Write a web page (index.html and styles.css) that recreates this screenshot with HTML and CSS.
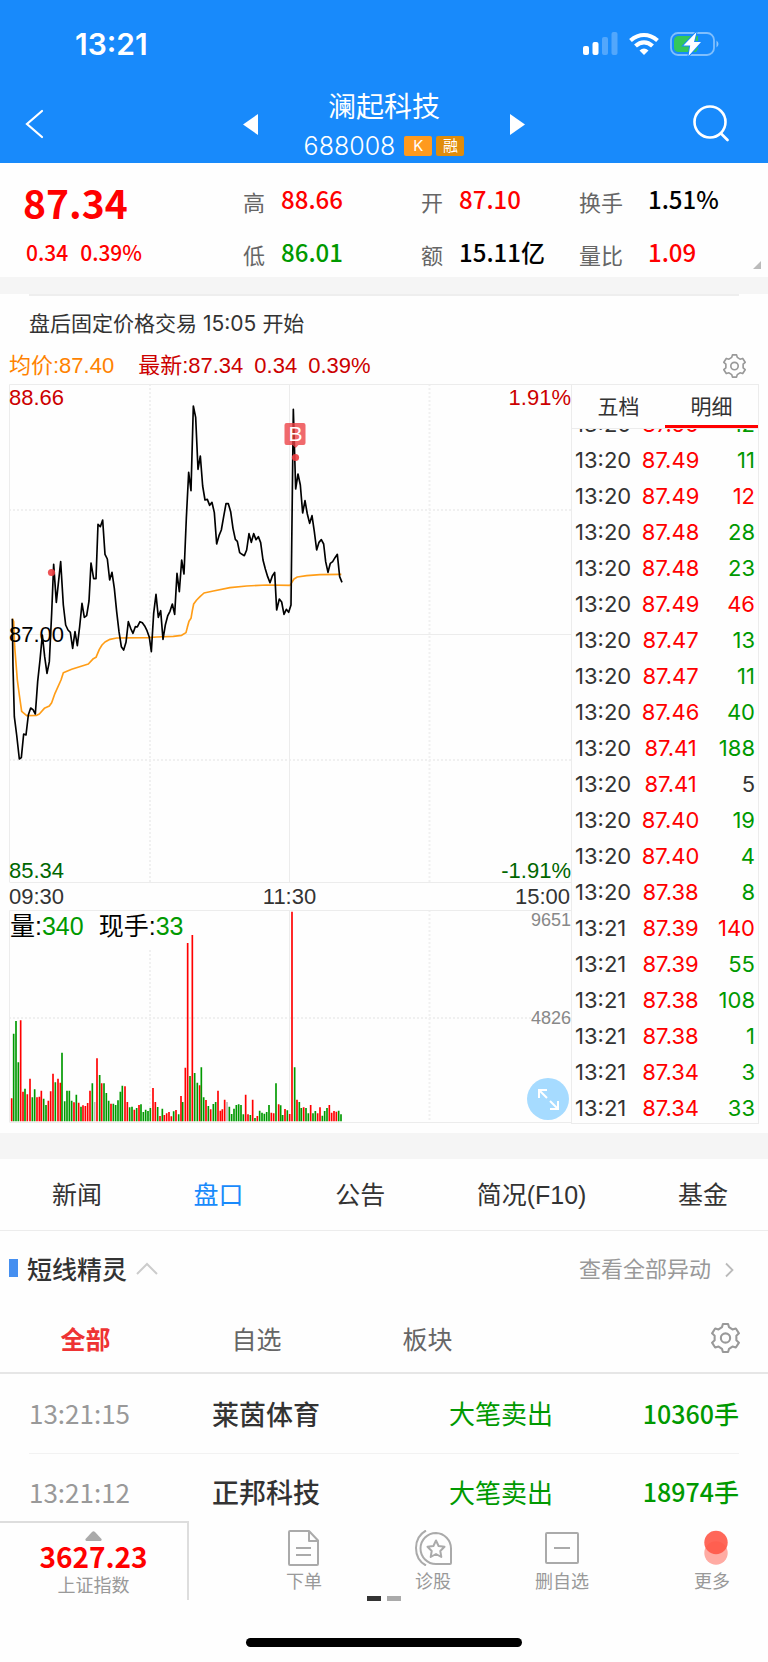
FILE: index.html
```html
<!DOCTYPE html>
<html lang="zh-CN">
<head>
<meta charset="utf-8">
<meta name="viewport" content="width=device-width, initial-scale=1">
<title>澜起科技 688008</title>
<link rel="stylesheet" href="styles.css">
</head>
<body>
<header class="top">
  <div class="status">
    <span class="clock">13:21</span>
    <div class="status-icons">
      <svg width="35" height="24" viewBox="0 0 35 24" fill="#fff"><rect y="14" width="6" height="9" rx="2"/><rect x="9.500" y="10" width="6" height="13" rx="2"/><g opacity=".25"><rect x="19" y="5" width="6" height="18" rx="2"/><rect x="28.500" y="0" width="6" height="23" rx="2"/></g></svg>
      <svg width="30" height="24" viewBox="0 0 30 24" fill="none" stroke="#fff" stroke-width="4.200"><path d="M1.500 8.500Q8 3 15 3t13.500 5.500"/><path d="M6.500 14Q10.500 10.300 15 10.300t8.500 3.700"/><path d="M15 23l-4.500-4.500q4.500-4 9 0z" fill="#fff" stroke="none"/></svg>
      <svg width="49" height="26" viewBox="0 0 49 26"><rect x="1" y="2" width="43" height="22" rx="7" fill="none" stroke="#fff" stroke-opacity=".45" stroke-width="1.800"/><path d="M8 5h20v13l-2 3H8q-4-.500-4-5v-6q0-4.500 4-5z" fill="#34c759"/><path d="M46.500 9.500q4 3.500 0 7z" fill="#fff" opacity=".5"/><path d="M26.500 1L13.500 14.500h6.700L18.500 25 31 11h-7z" fill="#fff" stroke="#188afb" stroke-width="2" paint-order="stroke"/></svg>
    </div>
  </div>
  <div class="nav">
    <button class="icon-btn back" aria-label="返回"><svg width="19" height="30" viewBox="0 0 19 30" fill="none" stroke="#fff" stroke-width="2.200" stroke-linecap="round"><path d="M17 2L2 15l15 13"/></svg></button>
    <div class="nav-mid">
      <button class="icon-btn" aria-label="上一只"><svg width="15" height="21" viewBox="0 0 15 21" fill="#fff"><path d="M15 0v21L0 10.500z"/></svg></button>
      <div class="names">
        <h1 class="name">澜起科技</h1>
        <div class="code-row"><span class="code">688008</span><span class="tag">K</span><span class="tag tag-dark">融</span></div>
      </div>
      <button class="icon-btn" aria-label="下一只"><svg width="15" height="21" viewBox="0 0 15 21" fill="#fff"><path d="M0 0v21l15-10.500z"/></svg></button>
    </div>
    <button class="icon-btn search" aria-label="搜索"><svg width="36" height="37" viewBox="0 0 36 37" fill="none" stroke="#fff" stroke-width="2.600" stroke-linecap="round"><circle cx="17" cy="17" r="15.500"/><path d="M28 28.500l6.500 6.500"/></svg></button>
  </div>
</header>

<section class="quote">
  <div class="last"><strong class="price">87.34</strong><p class="change"><span>0.34</span><span>0.39%</span></p></div>
  <dl class="stats">
    <div><dt>高</dt><dd class="red">88.66</dd></div>
    <div><dt>开</dt><dd class="red">87.10</dd></div>
    <div><dt>换手</dt><dd>1.51%</dd></div>
    <div><dt>低</dt><dd class="green">86.01</dd></div>
    <div><dt>额</dt><dd>15.11亿</dd></div>
    <div><dt>量比</dt><dd class="red">1.09</dd></div>
  </dl>
  <i class="corner"></i>
</section>

<p class="notice">盘后固定价格交易<span class="hours">15:05</span>开始</p>

<div class="legend">
  <span class="avg">均价:87.40</span>
  <span class="latest"><span>最新:87.34</span><span>0.34</span><span>0.39%</span></span>
  <button class="icon-btn gear" aria-label="图表设置"><svg width="23" height="24" viewBox="0 0 28 29"><use href="#gear"/></svg></button>
</div>

<main class="market">
  <div class="chart">
    <svg class="plot" viewBox="9 384 562 740" role="img" aria-label="分时走势">
      <g class="grid">
        <path d="M9.500 384.500H571M9.500 634.500H571M9.500 882.500H571M9.500 910.500H571M9.500 1122.500H571M9.500 384.500V882M289.500 384.500V882M9.500 910.500V1122M289.500 910.500V1122"/>
        <path class="dash" d="M9 510H571M9 760H571M9 1018H571M150 384V882M429.500 384V882M150 910V1122M429.500 910V1122"/>
      </g>
      <g class="bars" transform="translate(0 900) scale(.33333)">
        <path class="up" d="M35 664V595M62 664V361M69 664V575M82 664V583M90 664V536M111 664V592M118 664V590M124 664V572M145 664V602M152 664V574M159 664V521M174 664V536M181 664V548M222 664V607M236 664V608M249 664V616M256 664V618M263 664V609M270 664V572M291 664V475M305 664V550M333 664V611M375 664V559M382 664V606M403 664V629M417 664V615M459 664V564M466 664V606M480 664V648M493 664V645M500 664V640M507 664V636M514 664V649M528 664V630M543 664V588M556 664V503M563 664V129M577 664V105M599 664V556M618 664V600M632 664V628M654 664V572M661 664V632M667 664V628M674 664V599M737 664V584M744 664V643M758 664V599M772 664V648M814 664V638M821 664V640M836 664V613M855 664V627M869 664V642M876 664V35M891 664V599M911 664V622M932 664V615M953 664V640M960 664V622M988 664V615M995 664V638M1002 664V633M1009 664V635"/>
        <path class="down" d="M41 664V401M48 664V363M55 664V487M75 664V566M97 664V592M104 664V568M131 664V596M138 664V615M166 664V547M186 664V458M194 664V604M201 664V572M208 664V572M215 664V602M229 664V584M243 664V620M277 664V550M299 664V525M312 664V550M319 664V579M326 664V602M340 664V611M347 664V615M354 664V601M361 664V575M367 664V557M389 664V622M396 664V620M410 664V624M423 664V613M430 664V636M437 664V629M444 664V633M451 664V624M473 664V621M487 664V626M521 664V634M536 664V643M548 664V606M570 664V528M584 664V519M592 664V548M604 664V502M611 664V592M625 664V618M640 664V612M647 664V606M688 664V620M695 664V642M702 664V626M709 664V615M716 664V613M723 664V615M730 664V643M751 664V645M765 664V654M779 664V632M786 664V638M793 664V641M800 664V636M807 664V615M828 664V550M842 664V616M848 664V645M862 664V631M884 664V502M898 664V606M904 664V624M918 664V624M925 664V640M939 664V640M946 664V633M967 664V647M974 664V633M981 664V624M1016 664V632M1023 664V643"/>
        <path class="flat" d="M284 664V606M681 664V606"/>
      </g>
      <g class="lines" transform="translate(0 380) scale(.33333)">
        <polyline class="mean" points="37,716 41,725 44,800 52,900 58,945 65,994 80,1007 110,1006 118,1002 133,985 148,978 155,968 165,940 183,900 190,878 215,868 265,852 280,836 288,832 298,808 306,795 315,786 330,778 350,774 445,773 470,771 520,769 545,766 558,758 562,742 567,724 573,715 577,692 581,672 590,660 600,650 612,639 640,633 690,623 740,618 800,615 870,616 877,605 882,597 892,591 920,587 960,584 1024,583"/>
        <polyline class="now" points="37,716 39,860 43,1010 50,1065 58,1137 64,1133 71,1062 78,1065 85,1005 92,984 99,989 106,1002 113,905 120,840 127,765 134,830 141,880 148,845 155,700 161,553 169,667 182,545 190,675 197,735 204,750 211,757 218,805 225,755 232,797 239,740 246,670 253,712 260,707 267,663 273,549 281,596 288,596 294,433 301,440 308,420 315,523 322,537 329,600 336,577 343,625 350,695 357,755 364,800 371,810 378,787 385,725 392,745 399,760 406,740 412,741 420,725 427,728 434,738 441,752 448,772 454,815 461,700 468,643 475,712 482,692 489,778 496,735 503,708 510,694 517,672 524,703 531,580 538,635 545,540 552,582 559,415 566,277 573,332 580,78 587,112 594,268 601,228 608,318 615,360 622,358 629,376 636,367 643,398 650,492 657,467 664,450 671,410 678,371 685,371 692,395 699,445 706,478 712,484 719,518 726,523 733,527 740,510 747,461 754,487 761,461 768,479 775,470 782,488 789,540 796,567 803,590 810,608 817,588 824,577 830,690 838,657 845,666 852,703 859,688 866,697 873,675 880,88 887,327 894,282 901,315 908,399 915,362 922,402 929,430 936,407 943,455 950,510 957,487 964,479 971,492 977,545 984,577 991,550 998,545 1005,533 1012,523 1019,590 1026,607"/>
      </g>
      <g fill="#ec3f43">
        <circle cx="51.500" cy="572.500" r="3.600" opacity=".9"/><circle cx="295.500" cy="457.500" r="3.600" opacity=".9"/>
        <path opacity=".78" d="M286.500 423h17q2 0 2 2v18q0 2-2 2h-5l-2.800 3-3.200-3h-6q-2 0-2-2v-18q0-2 2-2z"/>
      </g>
      <text class="mark" x="295.500" y="441" text-anchor="middle">B</text>
      <g class="scale">
        <text class="t-up" x="9" y="405">88.66</text><text class="t-up" x="571" y="405" text-anchor="end">1.91%</text>
        <text class="t-mid" x="9" y="642">87.00</text>
        <text class="t-down" x="9" y="878">85.34</text><text class="t-down" x="571" y="878" text-anchor="end">-1.91%</text>
        <text x="9" y="904">09:30</text><text x="289.500" y="904" text-anchor="middle">11:30</text><text x="570" y="904" text-anchor="end">15:00</text>
        <text class="t-vol" x="571" y="926" text-anchor="end">9651</text><text class="t-vol" x="571" y="1024" text-anchor="end">4826</text>
      </g>
    </svg>
    <p class="volume"><span>量:<b>340</b></span><span>现手:<b>33</b></span></p>
    <button class="expand" aria-label="全屏"><svg width="21" height="21" viewBox="0 0 21 21" fill="none" stroke="#fff" stroke-width="2"><path d="M1 9V1h8M1.500 1.500l7.500 7.500M20 12v8h-8M19.500 19.500L12 12"/></svg></button>
  </div>
  <div class="ticker">
    <div class="ticker-tabs"><button>五档</button><button class="on">明细</button></div>
    <div class="ticks">
      <table>
        <tr><td>13:20</td><td>87.50</td><td class="green">12</td></tr>
        <tr><td>13:20</td><td>87.49</td><td class="green">11</td></tr>
        <tr><td>13:20</td><td>87.49</td><td class="red">12</td></tr>
        <tr><td>13:20</td><td>87.48</td><td class="green">28</td></tr>
        <tr><td>13:20</td><td>87.48</td><td class="green">23</td></tr>
        <tr><td>13:20</td><td>87.49</td><td class="red">46</td></tr>
        <tr><td>13:20</td><td>87.47</td><td class="green">13</td></tr>
        <tr><td>13:20</td><td>87.47</td><td class="green">11</td></tr>
        <tr><td>13:20</td><td>87.46</td><td class="green">40</td></tr>
        <tr><td>13:20</td><td>87.41</td><td class="green">188</td></tr>
        <tr><td>13:20</td><td>87.41</td><td>5</td></tr>
        <tr><td>13:20</td><td>87.40</td><td class="green">19</td></tr>
        <tr><td>13:20</td><td>87.40</td><td class="green">4</td></tr>
        <tr><td>13:20</td><td>87.38</td><td class="green">8</td></tr>
        <tr><td>13:21</td><td>87.39</td><td class="red">140</td></tr>
        <tr><td>13:21</td><td>87.39</td><td class="green">55</td></tr>
        <tr><td>13:21</td><td>87.38</td><td class="green">108</td></tr>
        <tr><td>13:21</td><td>87.38</td><td class="green">1</td></tr>
        <tr><td>13:21</td><td>87.34</td><td class="green">3</td></tr>
        <tr><td>13:21</td><td>87.34</td><td class="green">33</td></tr>
      </table>
    </div>
  </div>
</main>

<nav class="tabs"><button>新闻</button><button class="on">盘口</button><button>公告</button><button>简况(F10)</button><button>基金</button></nav>

<section class="alerts">
  <div class="alerts-head">
    <h2>短线精灵</h2>
    <svg width="22" height="13" viewBox="0 0 22 13" fill="none" stroke="#ccc" stroke-width="2"><path d="M1 12L11 2l10 10"/></svg>
    <a class="more" href="#all">查看全部异动<svg width="9" height="16" viewBox="0 0 9 16" fill="none" stroke="#bbb" stroke-width="1.800"><path d="M1 1.500L7.500 8 1 14.500"/></svg></a>
  </div>
  <div class="filters">
    <button class="on">全部</button><button>自选</button><button>板块</button>
    <button class="icon-btn gear" aria-label="设置"><svg width="29" height="30" viewBox="0 0 28 29"><g id="gear" fill="none" stroke="#999" stroke-width="2" stroke-linejoin="round"><path d="M11.500 1h5l.900 3 3.300 2.200 3.300-.900 3 4.700-2.500 2.300v4.400l2.500 2.300-3 4.700-3.300-.900-3.300 2.200-.900 3h-5l-.900-3-3.300-2.200-3.300.900-3-4.700 2.500-2.300v-4.400L1 10l3-4.700 3.300.900L10.600 4z"/><circle cx="14" cy="14.500" r="4.500"/></g></svg></button>
  </div>
  <table class="events" id="all">
    <tr><td class="time">13:21:15</td><td class="stock">莱茵体育</td><td class="act">大笔卖出</td><td class="qty">10360手</td></tr>
    <tr><td class="time">13:21:12</td><td class="stock">正邦科技</td><td class="act">大笔卖出</td><td class="qty">18974手</td></tr>
  </table>
</section>

<footer class="bottom">
  <div class="toolbar">
    <button class="index"><svg width="17" height="10" viewBox="0 0 17 10"><path d="M7 1q1.500-1.500 3 0l6.500 7q.500 1.500-1 2h-14q-1.500-.500-1-2z" fill="#aaa"/></svg><strong>3627.23</strong><span>上证指数</span></button>
    <div class="actions">
      <button><svg width="36" height="36" viewBox="0 0 36 36" fill="none" stroke="#aaa" stroke-width="2" stroke-linejoin="round"><path d="M4 1h19l9 9.500V34q0 1-1 1H4q-1 0-1-1V2q0-1 1-1zM23 1v10h9M10 18h15M10 25h15"/></svg>下单</button>
      <button><svg width="38" height="36" viewBox="0 0 38 36" fill="none" stroke="#aaa" stroke-width="2" stroke-linejoin="round"><path d="M22 3a15.500 15.500 0 0 1 15 15.500V33q0 1-1 1H22A15.500 15.500 0 0 1 22 3zM12 .500Q2 6 2 18t10 17.500"/><path d="M22 10.500l2.600 5.500 5.900.800-4.200 4.200 1 6L22 24l-5.300 3 1-6-4.200-4.200 5.900-.800z"/></svg>诊股</button>
      <button><svg width="36" height="36" viewBox="0 0 36 36" fill="none" stroke="#aaa" stroke-width="2"><rect x="2" y="3" width="32" height="30" rx="1"/><path d="M10 18h16"/></svg>删自选</button>
      <button><svg width="36" height="36" viewBox="0 0 36 36" fill="#ff5747"><circle cx="22" cy="23" r="11.700" opacity=".5"/><circle cx="22" cy="12.500" r="11.700" opacity=".9"/></svg>更多</button>
    </div>
  </div>
  <div class="pages"><i class="cur"></i><i></i></div>
  <div class="home"></div>
</footer>
</body>
</html>
```
FILE: styles.css
```css
* { box-sizing: border-box; margin: 0; padding: 0; }
body { background: #fefefe; color: #333; font-family: "Liberation Sans", "Noto Sans CJK SC", sans-serif; font-size: 22px; line-height: 1; }
button { background: none; border: 0; color: inherit; font: inherit; line-height: inherit; cursor: pointer; white-space: nowrap; }
svg { display: block; flex: none; }
table { border-collapse: collapse; width: 100%; }
.red { color: #f00; }
.green { color: #090; }
.icon-btn { display: flex; }

.top { height: 163px; background: #188afb; color: #fff; }
.status { display: flex; justify-content: space-between; align-items: center; height: 88px; padding: 0 49px 0 75px; }
.clock { font: 600 30px/30px Inter, sans-serif; }
.status-icons { display: flex; align-items: center; gap: 11px; }
.nav { display: grid; grid-template-columns: 1fr auto 1fr; align-items: center; height: 75px; padding: 0 25px 4px; }
.nav .search { justify-self: end; padding-right: 14px; }
.nav-mid { display: flex; align-items: center; justify-content: center; gap: 46px; }
.nav-mid .icon-btn { padding-top: 2px; }
.names { display: flex; flex-direction: column; align-items: center; }
.name { font: 400 28px/32px "Noto Sans CJK SC", sans-serif; }
.code-row { display: flex; align-items: center; gap: 4px; height: 38px; padding-top: 12px; }
.code { font: 300 25px/24px Inter, sans-serif; margin-right: 5px; }
.tag { width: 28px; border-radius: 2px; background: #ff9a1e; text-align: center; font: 400 15px/20px Inter, "Noto Sans CJK SC", sans-serif; }
.tag-dark { background: #e08c0b; }

.quote { position: relative; display: grid; grid-template-columns: 215px 1fr; height: 114px; padding-left: 23px; font-family: "Noto Sans CJK SC", sans-serif; }
.price { display: block; padding-top: 17px; color: #f00; font-size: 39px; font-weight: 700; line-height: 44px; }
.change { display: flex; gap: 12px; padding: 15px 0 0 3px; color: #f00; font-size: 21px; font-weight: 500; line-height: 26px; }
.stats { display: grid; grid-template-columns: 178fr 158fr 194fr; grid-template-rows: 53px 53px; padding-top: 9px; }
.stats div { display: flex; align-items: center; gap: 16px; padding-left: 5px; white-space: nowrap; }
.stats dt { color: #666; font-size: 22px; padding-top: 4px; }
.stats dd { color: #000; font-size: 24px; font-weight: 500; }
.stats .red { color: #f00; }
.stats .green { color: #090; }
.stats div:nth-child(3n) { gap: 25px; }
.corner { position: absolute; right: 7px; bottom: 8px; border: 4px solid transparent; border-right-color: #bbb; border-bottom-color: #bbb; }

.notice { border-top: 17px solid #f5f5f5; height: 73px; margin-bottom: 1px; padding-left: 29px; font: 400 21px/60px Inter, "Noto Sans CJK SC", sans-serif; position: relative; }
.notice::before { content: ""; position: absolute; top: 0; left: 29px; right: 29px; border-top: 2px solid #eee; }
.hours { margin: 0 6px; }
.legend { display: flex; align-items: center; height: 33px; padding: 0 22px 4px 9px; color: #c00; }
.avg { margin-right: 24px; color: #ff8200; }
.latest { display: flex; gap: 11px; }
.legend .gear { margin-left: auto; }

.market { display: grid; grid-template-columns: 562fr 188fr; padding: 0 9px; }
.chart { position: relative; }
.plot { width: 100%; }
.grid { fill: none; stroke: #ececec; stroke-width: 1; }
.dash { stroke-width: 2; stroke-dasharray: 2 2; opacity: .8; }
.bars { stroke-width: 5; fill: none; }
.up { stroke: #f00; }
.down { stroke: #090; }
.flat { stroke: #bbb; }
.lines { fill: none; stroke-width: 5; stroke-linejoin: round; }
.mean { stroke: #ff9d17; }
.now { stroke: #000; }
.mark { fill: #fff; font-size: 21px; }
.scale { font-size: 22px; fill: #333; }
.t-up { fill: #c00; }
.t-down { fill: #060; }
.t-mid { fill: #000; }
.t-vol { fill: #888; font-size: 18px; }
.volume { position: absolute; top: 527px; left: 1px; display: flex; gap: 15px; padding: 2px 3px 8px 0; background: #fefefe; color: #000; font-size: 25px; line-height: 27px; }
.volume b { color: #090; font-weight: 400; }
.expand { position: absolute; right: 2px; bottom: 4px; display: grid; place-items: center; width: 42px; height: 42px; border-radius: 50%; background: #a6dbff; }

.ticker { display: flex; flex-direction: column; border: 1px solid #ececec; }
.ticker-tabs { display: grid; grid-template-columns: 1fr 1fr; height: 44px; font: 400 21px/40px "Noto Sans CJK SC", sans-serif; border-bottom: 1px solid #ececec; }
.ticker-tabs button { border-bottom: 3px solid transparent; }
.ticker-tabs .on { border-bottom-color: #f00; }
.ticks { flex: 1 1 0; overflow: hidden; }
.ticks table { margin-top: -23px; table-layout: fixed; font: 400 22px/36px Inter, sans-serif; }
.ticks tr { height: 36px; }
.ticks td { padding: 0; }
.ticks td:first-child { width: 35%; padding-left: 3px; }
.ticks td:nth-child(2) { width: 36%; color: #f00; text-align: center; }
.ticks td:last-child { padding-right: 3px; text-align: right; }

.tabs { display: flex; justify-content: space-between; align-items: center; margin-top: 9px; border-top: 26px solid #f5f5f5; border-bottom: 1px solid #ececec; height: 98px; padding: 2px 40px 0 52px; font-size: 25px; }
.tabs .on { color: #188afb; }
.alerts-head { display: flex; align-items: center; height: 74px; padding: 0 34px 0 9px; }
.alerts-head h2 { display: flex; align-items: center; gap: 9px; margin-right: 9px; font: 500 25px/30px "Noto Sans CJK SC", sans-serif; }
.alerts-head h2::before { content: ""; width: 9px; height: 18px; background: #458ff0; }
.more { display: flex; align-items: center; gap: 14px; margin-left: auto; padding-top: 4px; color: #999; font-size: 22px; text-decoration: none; }
.filters { display: grid; grid-template-columns: 171px 171px 171px 1fr; align-items: center; height: 69px; border-bottom: 2px solid #e6e6e6; padding: 0 28px 2px 0; font: 400 25px/30px "Noto Sans CJK SC", sans-serif; color: #666; }
.filters .on { color: #e33; font-weight: 700; }
.filters .gear { justify-self: end; }
.events { width: calc(100% - 58px); margin: 0 29px; font-family: "Noto Sans CJK SC", sans-serif; table-layout: fixed; }
.events tr { height: 79px; border-bottom: 1px solid #f2f2f2; }
.events tr:last-child { height: 68px; border: 0; }
.events tr:last-child td { padding-top: 9px; }
.time { width: 183px; color: #999; font-size: 26px; }
.stock { width: 237px; font-size: 27px; font-weight: 500; }
.act { color: #090; font-size: 26px; }
.qty { color: #090; font-size: 25px; font-weight: 500; text-align: right; }

.toolbar { display: grid; grid-template-columns: 189px 1fr; height: 79px; }
.index { display: flex; flex-direction: column; align-items: center; padding-top: 8px; border-top: 2px solid #ddd; border-right: 2px solid #ddd; color: #999; font-size: 18px; }
.index strong { color: #f00; font: 700 28px/30px "Noto Sans CJK SC", sans-serif; margin-bottom: 6px; }
.actions { display: flex; gap: 75px; padding: 9px 29px 0 88px; color: #999; font-size: 18px; }
.actions button { display: flex; flex-direction: column; align-items: center; gap: 7px; width: 54px; }
.actions button:last-child { margin-left: auto; }
.pages { display: flex; justify-content: center; gap: 6px; margin-top: -4px; }
.pages i { width: 14px; height: 5px; background: #aaa; }
.pages .cur { background: #333; }
.home { width: 36%; height: 9px; margin: 37px auto 15px; border-radius: 5px; background: #000; }
```
